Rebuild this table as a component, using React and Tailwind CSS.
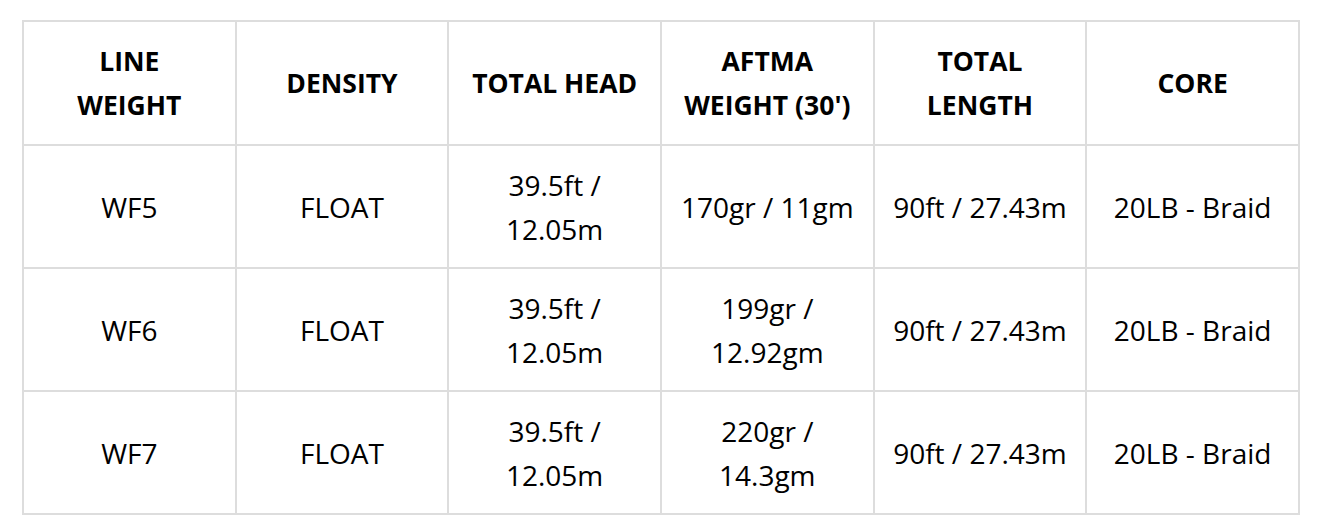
const headers = [
  ['LINE', 'WEIGHT'],
  ['DENSITY'],
  ['TOTAL HEAD'],
  ['AFTMA', "WEIGHT (30')"],
  ['TOTAL', 'LENGTH'],
  ['CORE'],
];

const rows = [
  ['WF5', 'FLOAT', '39.5ft / 12.05m', '170gr / 11gm', '90ft / 27.43m', '20LB - Braid'],
  ['WF6', 'FLOAT', '39.5ft / 12.05m', '199gr / 12.92gm', '90ft / 27.43m', '20LB - Braid'],
  ['WF7', 'FLOAT', '39.5ft / 12.05m', '220gr / 14.3gm', '90ft / 27.43m', '20LB - Braid'],
];

export default function App() {
  return (
    <div className="min-h-screen bg-white pt-[20px] pl-[22px] text-black font-['Open_Sans',sans-serif]">
      <table className="w-[1278px] table-fixed border-collapse text-center leading-[44px]">
        <thead>
          <tr>
            {headers.map((h, i) => (
              <th key={i} className="h-[124px] border-2 border-[#dddddd] px-3 text-[26.5px] font-bold">
                {h.map((line, j) => (
                  <div key={j}>{line}</div>
                ))}
              </th>
            ))}
          </tr>
        </thead>
        <tbody>
          {rows.map((row, r) => (
            <tr key={r}>
              {row.map((cell, c) => (
                <td key={c} className="h-[123px] border-2 border-[#dddddd] px-4 text-[28px] font-normal">
                  {cell}
                </td>
              ))}
            </tr>
          ))}
        </tbody>
      </table>
    </div>
  );
}
